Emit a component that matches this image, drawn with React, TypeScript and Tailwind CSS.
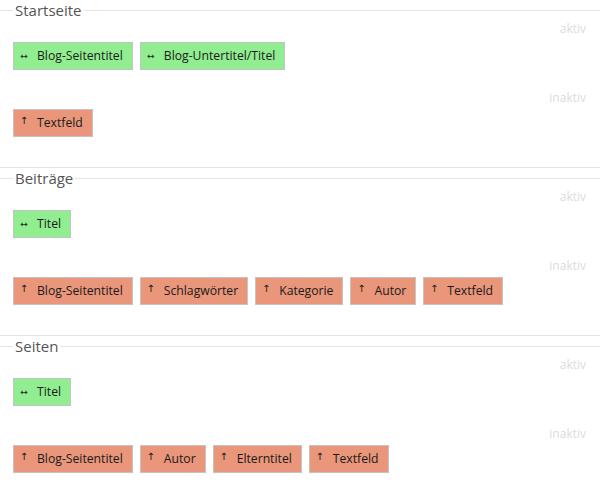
type Chip = { label: string };

type Section = {
  title: string;
  active: string[];
  inactive: string[];
};

const sections: Section[] = [
  {
    title: "Startseite",
    active: ["Blog-Seitentitel", "Blog-Untertitel/Titel"],
    inactive: ["Textfeld"],
  },
  {
    title: "Beiträge",
    active: ["Titel"],
    inactive: ["Blog-Seitentitel", "Schlagwörter", "Kategorie", "Autor", "Textfeld"],
  },
  {
    title: "Seiten",
    active: ["Titel"],
    inactive: ["Blog-Seitentitel", "Autor", "Elterntitel", "Textfeld"],
  },
];

const ActiveChip = ({ label }: Chip) => (
  <div className="flex h-[28px] items-center border border-[#c4c4c4] bg-[#90ee90] pl-[5px] pr-[9px] text-[12.2px] text-[#1a1a1a]">
    <span className="w-[10px] text-center font-['DejaVu_Sans',sans-serif] text-[9px] leading-none">↔</span>
    <span className="ml-[8px]">{label}</span>
  </div>
);

const InactiveChip = ({ label }: Chip) => (
  <div className="flex h-[28px] items-center border border-[#c4c4c4] bg-[#e9967a] pl-[5px] pr-[9px] text-[12.2px] text-[#1a1a1a]">
    <span className="mb-[4px] w-[10px] text-center font-['DejaVu_Sans',sans-serif] text-[10px] leading-none">↑</span>
    <span className="ml-[8px]">{label}</span>
  </div>
);

const Zone = ({ label, gap, children }: { label: string; gap: string; children: React.ReactNode }) => (
  <div className="flex flex-col">
    <div className="pr-[1px] text-right text-[12px] leading-[16px] text-[#dcdcdc]">
      {label}
    </div>
    <div className={`${gap} flex flex-row flex-wrap gap-[7px]`}>{children}</div>
  </div>
);

export default function App() {
  return (
    <div className="h-[504px] w-[600px] overflow-hidden bg-white font-['Open_Sans',sans-serif]">
      {sections.map((s) => (
        <fieldset
          key={s.title}
          className="border-x-0 border-y border-[#e4e4e4] px-[13px] pb-[30px] last:pb-[40px]"
        >
          <legend className="px-[2px] text-[15px] leading-[21px] text-[#555]">
            {s.title}
          </legend>
          <Zone label="aktiv" gap="mt-[5px]">
            {s.active.map((a) => (
              <ActiveChip key={a} label={a} />
            ))}
          </Zone>
          <div className="mt-[20px]">
            <Zone label="inaktiv" gap="mt-[3px]">
              {s.inactive.map((a) => (
                <InactiveChip key={a} label={a} />
              ))}
            </Zone>
          </div>
        </fieldset>
      ))}
    </div>
  );
}
